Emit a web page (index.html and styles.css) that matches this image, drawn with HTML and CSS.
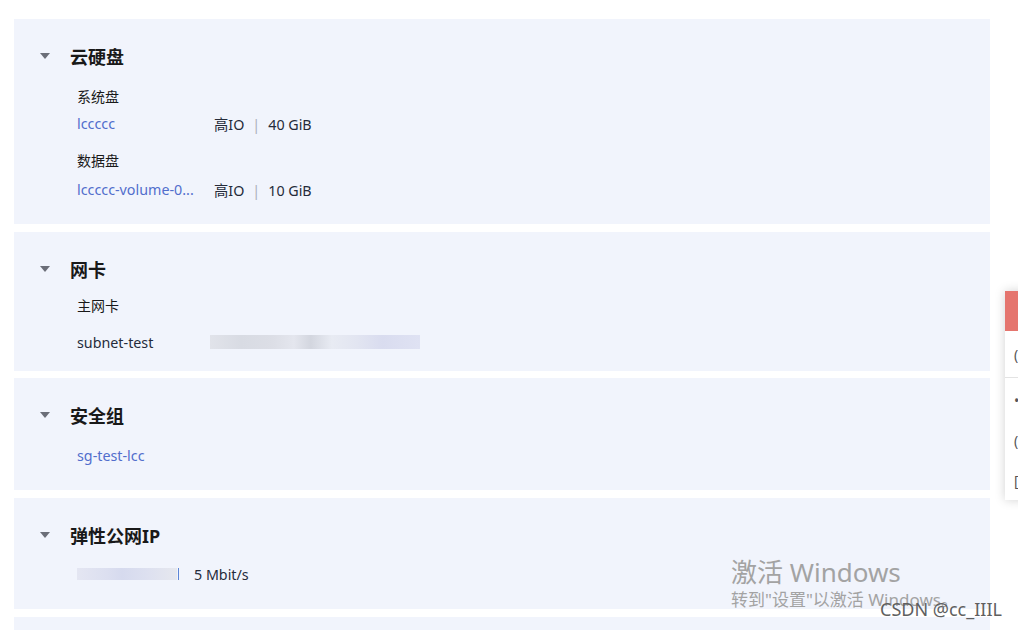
FILE: index.html
```html
<!DOCTYPE html>
<html lang="zh-CN">
<head>
    <meta charset="UTF-8">
    <title>云服务器详情</title>
    <link rel="stylesheet" href="styles.css">
</head>
<body>
    <div class="page">
        <div class="panel panel-disk">
            <div class="panelHead"><span class="arrow"></span>云硬盘</div>
            <div class="subTitle">系统盘</div>
            <div class="row">
                <a class="link nameCol" href="#">lccccc</a>
                <span>高IO<span class="sep">|</span>40 GiB</span>
            </div>
            <div class="subTitle second">数据盘</div>
            <div class="row">
                <a class="link nameCol" href="#">lccccc-volume-0...</a>
                <span>高IO<span class="sep">|</span>10 GiB</span>
            </div>
        </div>

        <div class="panel panel-nic">
            <div class="panelHead"><span class="arrow"></span>网卡</div>
            <div class="subTitle">主网卡</div>
            <div class="row">
                <span class="nameCol">subnet-test</span>
                <span class="blur blurWide"></span>
            </div>
        </div>

        <div class="panel panel-sg">
            <div class="panelHead"><span class="arrow"></span>安全组</div>
            <div class="row">
                <a class="link" href="#">sg-test-lcc</a>
            </div>
        </div>

        <div class="panel panel-eip">
            <div class="panelHead"><span class="arrow"></span>弹性公网IP</div>
            <div class="row">
                <span class="blur blurSmall"></span>
                <span class="ipSep"></span>
                <span>5 Mbit/s</span>
            </div>
        </div>

        <div class="panel panel-more"></div>
    </div>

    <!-- floating helper on the right edge -->
    <div class="sideBox">
        <div class="sideHead"></div>
        <div class="sideItem sideTop">(</div>
        <div class="sideItem">•</div>
        <div class="sideItem">(</div>
        <div class="sideItem">[</div>
    </div>

    <div class="winMark">
        <div class="winBig">激活 Windows</div>
        <div class="winSmall">转到"设置"以激活 Windows。</div>
    </div>
    <div class="csdn">CSDN @cc_IIIL</div>
</body>
</html>
```

FILE: styles.css
```css
body {
    margin: 0;
    padding: 0;
    background-color: #fff;
    font-family: "Noto Sans", "Noto Sans CJK SC", sans-serif;
    font-size: 14px;
    color: #252b3a;
    overflow: hidden;
    height: 630px;
}
.page {
    padding-top: 19px;
    padding-left: 14px;
    width: 976px;
}
.panel {
    background-color: #f1f4fc;
    padding: 25px 0 24px 0;
    margin-bottom: 8px;
}
.panel-nic {
    margin-bottom: 7px;
    padding-bottom: 18px;
}
.panel-more {
    height: 40px;
}
.panelHead {
    display: flex;
    align-items: center;
    height: 24px;
    font-size: 18px;
    font-weight: 700;
    color: #191919;
}
.arrow {
    width: 0;
    height: 0;
    margin-left: 26px;
    margin-right: 20px;
    border-left: 5px solid transparent;
    border-right: 5px solid transparent;
    border-top: 6px solid #6b6e78;
}
.subTitle {
    margin: 18px 0 0 63px;
    line-height: 22px;
    font-size: 14px;
    color: #191919;
}
.subTitle.second {
    margin-top: 16px;
}
.panel-nic .subTitle {
    margin-top: 14px;
}
.row {
    display: flex;
    align-items: center;
    margin: 4px 0 0 63px;
    height: 22px;
    font-size: 14.3px;
}
.panel-disk .subTitle.second + .row {
    margin-top: 6px;
}
.panel-nic .row {
    margin-top: 14px;
}
.panel-sg .row {
    margin-top: 17px;
}
.panel-eip .row {
    margin-top: 16px;
}
.nameCol {
    width: 137px;
}
.link {
    color: #526ecc;
    text-decoration: none;
}
.sep {
    color: #a9adb6;
    margin: 0 8px;
}
.blur {
    display: inline-block;
    height: 12px;
}
.blurWide {
    width: 210px;
    height: 14px;
    margin-left: -4px;
    background: linear-gradient(90deg, #e1e3ea 0, #d8dbe3 15%, #dcdee6 30%, #e4e6ee 40%, #d3d6df 48%, #e8ebf3 58%, #e2e5f1 70%, #d9dcef 82%, #dfe2f3 100%);
}
.blurSmall {
    width: 100px;
    background: linear-gradient(90deg, #e4e6f2 0, #dcdff0 30%, #d6daee 45%, #dde0f0 70%, #e6e8ee 100%);
}
.ipSep {
    display: inline-block;
    width: 1px;
    height: 12px;
    background-color: #5d86d6;
    margin: 0 15px 0 1px;
}
.sideBox {
    position: absolute;
    left: 1005px;
    top: 291px;
    width: 200px;
    height: 209px;
    background-color: #fff;
    box-shadow: 0 0 10px rgba(0, 0, 0, 0.18);
}
.sideHead {
    height: 40px;
    background-color: #e5756e;
}
.sideItem {
    height: 40px;
    line-height: 46px;
    padding-left: 9px;
    color: #555;
    font-size: 14px;
}
.sideTop {
    height: 46px;
    line-height: 48px;
    border-bottom: 1px solid #e3e3e3;
}
.winMark {
    position: absolute;
    left: 731px;
    top: 555px;
    color: #a3a3a3;
    font-family: "Noto Sans", "Noto Sans CJK SC", sans-serif;
}
.winBig {
    font-size: 26px;
    line-height: 34px;
}
.winSmall {
    font-size: 17px;
    line-height: 22px;
}
.csdn {
    position: absolute;
    left: 880px;
    top: 597px;
    font-size: 18px;
    color: #5f5f5f;
    font-family: "Noto Sans", sans-serif;
}
```
